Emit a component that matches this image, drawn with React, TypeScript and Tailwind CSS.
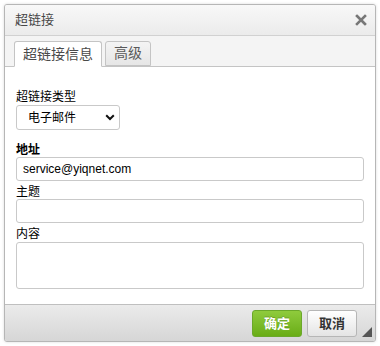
import React from 'react';

export default function App() {
  return (
    <div className="w-[380px] h-[346px] bg-white p-[4px] font-['Liberation_Sans','Noto_Sans_CJK_SC',sans-serif]">
      <div className="w-[372px] h-[338px] flex flex-col border border-[#b6b6b6] rounded-[3px] shadow-[0_0_3px_rgba(0,0,0,0.15)] overflow-hidden bg-[#f4f4f4]">
        {/* Title */}
        <div className="h-[31px] shrink-0 flex items-center justify-between pl-[10px] pr-[7px] border-b border-[#d1d1d1] bg-gradient-to-b from-[#f8f8f8] to-[#ebebeb]">
          <span className="text-[13px] text-[#474747]">超链接</span>
          <svg width="12" height="12" viewBox="0 0 12 12" className="mr-[1px]">
            <path d="M2 2 L10 10 M10 2 L2 10" stroke="#777" strokeWidth="2.6" strokeLinecap="square" />
          </svg>
        </div>

        {/* Tabs */}
        <div className="h-[30px] shrink-0 flex items-end gap-[3px] pl-[9px] bg-[#f4f4f4]">
          <div className="h-[26px] -mb-px px-[8px] flex items-center border border-[#c4c4c4] border-b-white rounded-t-[3px] bg-white text-[14px] text-[#4a4a4a] relative z-10">
            超链接信息
          </div>
          <div className="h-[25px] px-[8px] flex items-center border border-[#c4c4c4] rounded-t-[3px] bg-gradient-to-b from-[#f4f4f4] to-[#e6e6e6] text-[14px] text-[#595959]">
            高级
          </div>
        </div>

        {/* Content */}
        <div className="flex-1 bg-white border-t border-[#c4c4c4] px-[11px] pt-[23px] text-[12px] text-black">
          <div className="leading-[14px]">超链接类型</div>
          <div className="mt-[1px] w-[104px] h-[25px] flex items-center justify-between pl-[11px] pr-[4px] border border-[#c9c9c9] rounded-[3px] bg-white">
            <span className="text-[12px] text-black">电子邮件</span>
            <svg width="10" height="7" viewBox="0 0 10 7">
              <path d="M1.2 1.2 L5 5 L8.8 1.2" fill="none" stroke="#111" strokeWidth="2" />
            </svg>
          </div>

          <div className="mt-[13px] leading-[14px] font-bold">地址</div>
          <div className="h-[24px] flex items-center pl-[6px] border border-[#c9c9c9] rounded-[3px] text-[12px] text-black">
            service@yiqnet.com
          </div>

          <div className="mt-[4px] leading-[14px]">主题</div>
          <div className="h-[24px] border border-[#c9c9c9] rounded-[3px]" />

          <div className="mt-[4px] leading-[14px]">内容</div>
          <div className="mt-[1px] h-[47px] border border-[#c9c9c9] rounded-[3px]" />
        </div>

        {/* Footer */}
        <div className="h-[37px] shrink-0 relative flex items-start justify-end gap-[5px] pt-[5px] pr-[18px] border-t border-[#bfbfbf] bg-gradient-to-b from-[#ebebeb] to-[#d6d6d6]">
          <div className="w-[50px] h-[27px] flex items-center justify-center rounded-[3px] border border-[#6ba82a] bg-gradient-to-b from-[#8fcb3c] to-[#69ad14] text-[13px] font-bold text-white [text-shadow:0_-1px_0_rgba(0,0,0,0.2)]">
            确定
          </div>
          <div className="w-[50px] h-[27px] flex items-center justify-center rounded-[3px] border border-[#b6b6b6] bg-gradient-to-b from-white to-[#e4e4e4] text-[13px] font-bold text-[#333]">
            取消
          </div>
          <svg width="10" height="10" viewBox="0 0 10 10" className="absolute right-[3px] bottom-[4px]">
            <path d="M10 0 L10 10 L0 10 Z" fill="#555" />
          </svg>
        </div>
      </div>
    </div>
  );
}
